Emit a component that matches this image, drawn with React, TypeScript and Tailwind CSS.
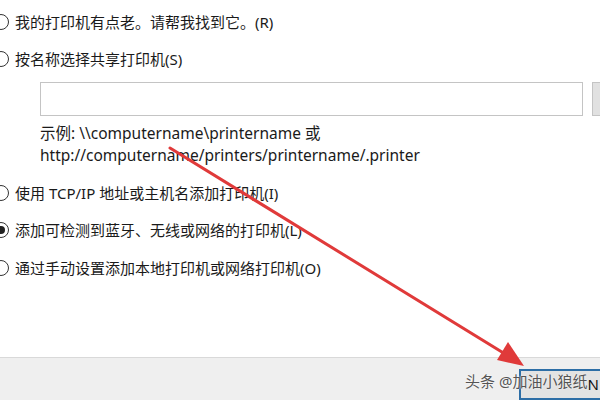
import React from "react";

const font = { fontFamily: '"Noto Sans", "Noto Sans CJK SC", sans-serif' };

function Radio({ checked }: { checked?: boolean }) {
  return (
    <div className="relative w-[16px] h-[16px] rounded-full border border-[#333] bg-white ml-[-7px] shrink-0">
      {checked && <div className="absolute left-[3px] top-[3px] w-[8px] h-[8px] rounded-full bg-[#222]" />}
    </div>
  );
}

function Row({ label, checked, className }: { label: string; checked?: boolean; className?: string }) {
  return (
    <div className={"flex items-center gap-[6px] h-[24px] " + (className || "")}>
      <Radio checked={checked} />
      <span className="text-[15px] text-[#1a1a1a] leading-none">{label}</span>
    </div>
  );
}

export default function App() {
  return (
    <div className="relative w-[600px] h-[400px] bg-white overflow-hidden" style={font}>
      <div className="flex flex-col h-[357px]">
        <Row label="我的打印机有点老。请帮我找到它。(R)" className="mt-[10px]" />
        <Row label="按名称选择共享打印机(S)" className="mt-[13px]" />
        <div className="flex items-start gap-[9px] mt-[11px] ml-[40px]">
          <div className="w-[543px] h-[34px] shrink-0 border border-[#c4c4c4] bg-white" />
          <div className="w-[20px] h-[34px] shrink-0 border border-[#c4c4c4] bg-[#e1e1e1]" />
        </div>
        <div className="ml-[40px] mt-[6px] text-[15.5px] text-[#1a1a1a] leading-[22px]">
          <div>示例: \\computername\printername 或</div>
          <div>http://computername/printers/printername/.printer</div>
        </div>
        <Row label="使用 TCP/IP 地址或主机名添加打印机(I)" className="mt-[15px]" />
        <Row label="添加可检测到蓝牙、无线或网络的打印机(L)" checked className="mt-[13px]" />
        <Row label="通过手动设置添加本地打印机或网络打印机(O)" className="mt-[14px]" />
      </div>
      <div className="h-[43px] border-t border-[#d9d9d9] bg-[#efefef] flex items-end justify-end">
        <div className="w-[84px] h-[31px] border-2 border-[#2d6ea6] bg-[#e3e3e3] mr-[-3px] flex items-center justify-end pr-[2px] text-[15px] text-[#111]">
          N
        </div>
      </div>
      <div className="absolute left-[465px] top-[370px] text-[15px] text-[#555]" style={{ textShadow: "0 0 2px #fff" }}>
        头条 @加油小狼纸
      </div>
      <svg className="absolute left-0 top-0" width="600" height="400">
        <line x1="170" y1="148" x2="510" y2="357" stroke="#e03a3a" strokeWidth="3" strokeLinecap="round" />
        <polygon points="524,366 497,360 508,342" fill="#e03a3a" />
      </svg>
    </div>
  );
}
